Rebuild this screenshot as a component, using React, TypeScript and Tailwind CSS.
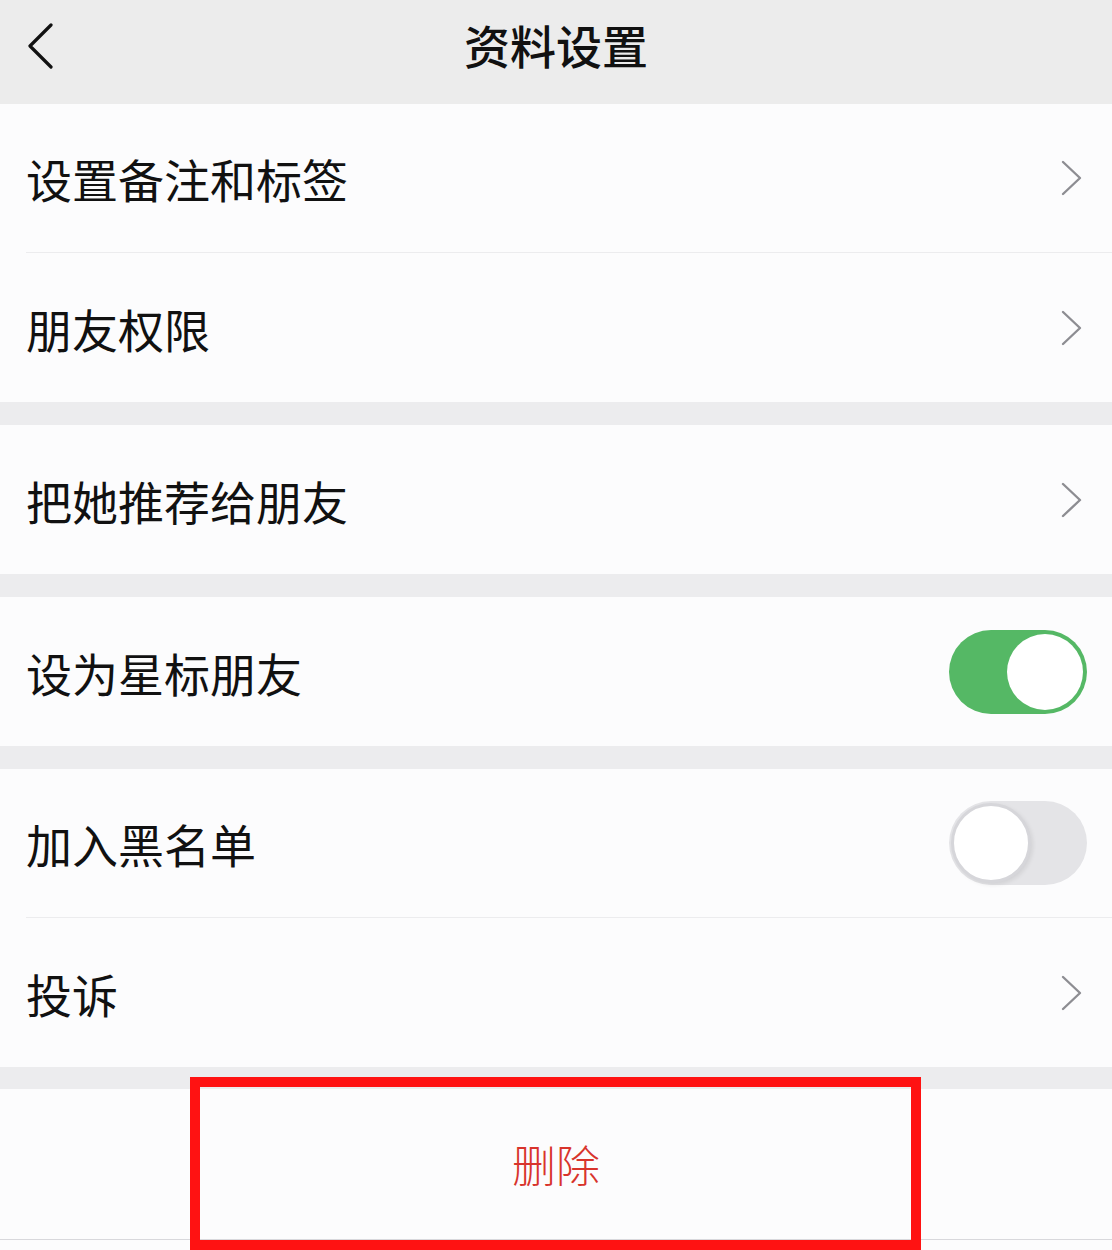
import React from "react";

const font = { fontFamily: '"Noto Sans CJK SC", "Noto Sans", sans-serif' };

function Chevron() {
  return (
    <svg width="22" height="36" viewBox="0 0 22 36" className="shrink-0">
      <polyline points="3,2 20,18 3,34" fill="none" stroke="#8d8d92" strokeWidth="2.4" strokeLinecap="round" strokeLinejoin="round" />
    </svg>
  );
}

function Toggle({ on }: { on: boolean }) {
  return on ? (
    <div className="-mr-[5px] flex h-[84px] w-[138px] items-center justify-end rounded-full bg-[#55b865] p-[4px]">
      <div className="h-[76px] w-[76px] rounded-full bg-white" />
    </div>
  ) : (
    <div className="-mr-[5px] flex h-[84px] w-[138px] items-center justify-start rounded-full bg-[#e4e4e7] p-[2px]">
      <div className="h-[80px] w-[80px] rounded-full border-[3px] border-[#d6d6da] bg-white shadow-[2px_2px_4px_rgba(0,0,0,0.08)]" />
    </div>
  );
}

function Row({ label, right, divider }: { label: string; right: React.ReactNode; divider?: boolean }) {
  return (
    <div className="bg-[#fcfcfd] pl-[26px]">
      <div className={`flex h-[149px] items-center justify-between pr-[30px] ${divider ? "border-b border-[#ececee]" : ""}`}>
        <span className="text-[46px] leading-none text-[#111]">{label}</span>
        {right}
      </div>
    </div>
  );
}

function Gap() {
  return <div className="h-[23px] bg-[#ececee]" />;
}

export default function App() {
  return (
    <div className="relative h-[1250px] w-[1112px] overflow-hidden bg-[#ececee]" style={font}>
      <header className="relative flex h-[104px] items-center justify-center bg-[#ececec]">
        <svg width="30" height="46" viewBox="0 0 30 46" className="absolute left-[26px] top-[23px]">
          <polyline points="25,2 4,23 25,44" fill="none" stroke="#111" strokeWidth="3.2" strokeLinecap="round" strokeLinejoin="round" />
        </svg>
        <h1 className="-mt-[16px] text-[46px] font-medium leading-none text-[#111]">资料设置</h1>
      </header>

      <Row label="设置备注和标签" right={<Chevron />} divider />
      <Row label="朋友权限" right={<Chevron />} />
      <Gap />
      <Row label="把她推荐给朋友" right={<Chevron />} />
      <Gap />
      <Row label="设为星标朋友" right={<Toggle on />} />
      <Gap />
      <Row label="加入黑名单" right={<Toggle on={false} />} divider />
      <Row label="投诉" right={<Chevron />} />
      <div className="h-[22px] bg-[#ececee]" />
      <div className="flex h-[151px] items-center justify-center border-b border-[#d8d8dc] bg-[#fcfcfd]">
        <span className="text-[44px] font-light leading-none text-[#d8342c]">删除</span>
      </div>
      <div className="h-[20px] bg-[#fcfcfd]" />

      <div className="absolute left-[190px] top-[1077px] h-[173px] w-[731px] border-[10px] border-[#ff1212]" />
    </div>
  );
}
